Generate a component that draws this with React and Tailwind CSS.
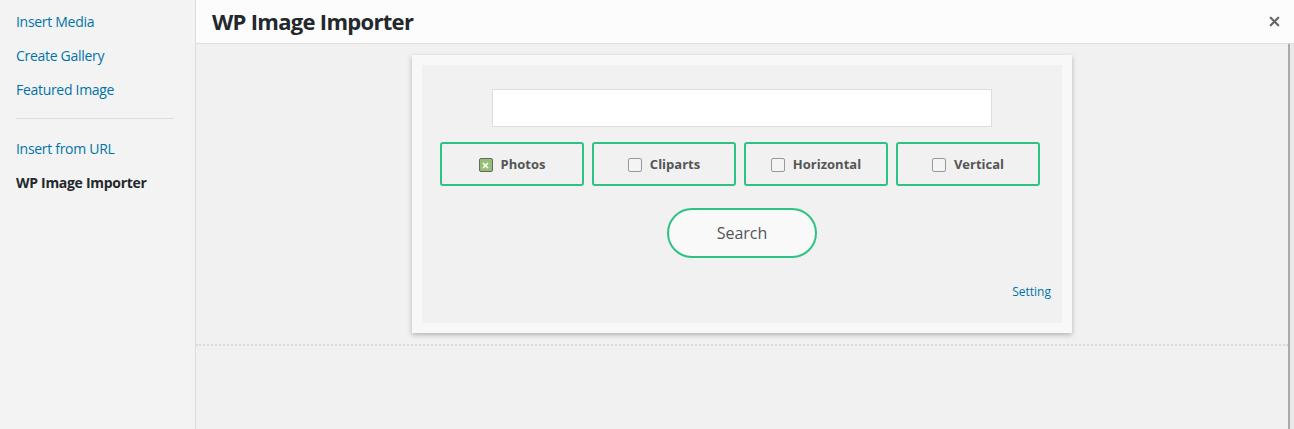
import { X } from 'lucide-react'

const sideLinks = ['Insert Media', 'Create Gallery', 'Featured Image']
const filters = [
  { label: 'Photos', checked: true },
  { label: 'Cliparts', checked: false },
  { label: 'Horizontal', checked: false },
  { label: 'Vertical', checked: false },
]

function Box({ checked }) {
  if (checked) {
    return (
      <span className="w-[14px] h-[14px] rounded-[2px] border border-[#666] bg-[#94bf74] flex items-center justify-center">
        <svg width="7" height="7" viewBox="0 0 7 7">
          <path d="M1 1L6 6M6 1L1 6" stroke="#fff" strokeWidth="1.6" />
        </svg>
      </span>
    )
  }
  return <span className="w-[14px] h-[14px] rounded-[2px] border border-[#999] bg-[#f4f4f4]" />
}

export default function App() {
  return (
    <div className="w-[1294px] h-[429px] flex bg-[#f1f1f1] overflow-hidden font-['Open_Sans',sans-serif]">
      {/* Sidebar */}
      <div className="w-[196px] shrink-0 bg-[#f3f3f3] border-r border-[#ddd] pt-[11px] px-4">
        {sideLinks.map(l => (
          <div key={l} className="h-[34px] text-[14px] tracking-[-0.3px] text-[#0073aa]">{l}</div>
        ))}
        <div className="border-t border-[#ddd] w-[158px] mt-[5px] mb-[19px]" />
        <div className="h-[34px] text-[14px] tracking-[-0.3px] text-[#0073aa]">Insert from URL</div>
        <div className="text-[14px] tracking-[-0.3px] font-bold text-[#23282d]">WP Image Importer</div>
      </div>

      {/* Main */}
      <div className="flex-1 flex flex-col">
        <div className="h-[44px] shrink-0 bg-[#fcfcfc] border-b border-[#ddd] flex items-center justify-between pl-4 pr-[12px]">
          <h1 className="text-[22px] font-bold text-[#23282d] tracking-[-0.7px]">WP Image Importer</h1>
          <X size={15} strokeWidth={3.5} className="text-[#666]" />
        </div>
        <div className="flex-1 flex">
          <div className="flex-1 flex flex-col items-center pt-[11px]">
            <div className="w-[660px] p-[10px] bg-[#f8f8f8] shadow-[0_2px_5px_rgba(0,0,0,0.25)]">
              <div className="bg-[#f1f1f1] h-[258px] pt-[24px] flex flex-col">
                <input className="mx-auto block w-[500px] h-[38px] bg-white border border-[#ddd] outline-none" />
                <div className="flex gap-2 pl-[18px] mt-[15px]">
                  {filters.map(f => (
                    <div
                      key={f.label}
                      className="w-[144px] h-[44px] pt-[2px] rounded-[3px] border-2 border-[#2fc286] flex items-center justify-center gap-[8px] text-[13px] font-bold text-[#555]"
                    >
                      <Box checked={f.checked} />
                      <span>{f.label}</span>
                    </div>
                  ))}
                </div>
                <button className="mx-auto mt-[22px] w-[150px] h-[50px] rounded-full border-2 border-[#2fc286] bg-[#f9f9f9] text-[16px] text-[#555]">
                  Search
                </button>
                <div className="mt-auto mb-[22px] pr-[11px] text-right text-[12px] text-[#0073aa]">Setting</div>
              </div>
            </div>
            <div className="w-full border-t-2 border-dotted border-[#d8d8d8] mt-[11px]" />
          </div>
          <div className="w-[6px] shrink-0 border-l-2 border-[#aaa] bg-[#e9e9e9]" />
        </div>
      </div>
    </div>
  )
}
